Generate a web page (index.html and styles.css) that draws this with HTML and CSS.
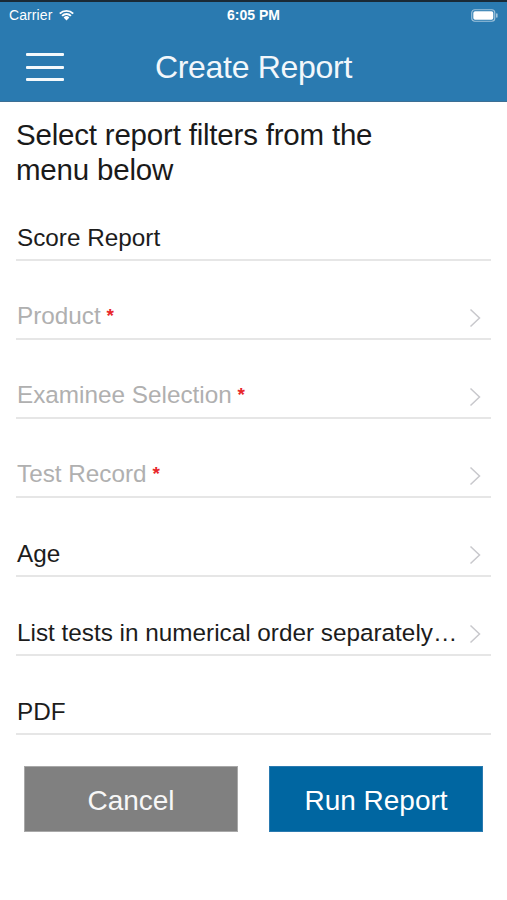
FILE: index.html
```html
<!DOCTYPE html>
<html lang="en">
<head>
<meta charset="utf-8">
<title>Create Report</title>
<link rel="stylesheet" href="styles.css">
</head>
<body>
<div class="app">
  <header class="header">
    <div class="statusbar">
      <div class="sb-left">
        <span class="carrier">Carrier</span>
        <svg class="wifi" width="17" height="12" viewBox="0 0 17 12">
          <path d="M8.5 11.5 L5.6 8.4 A4.2 4.2 0 0 1 11.4 8.4 Z" fill="#fff"/>
          <path d="M3.4 6.2 A7.3 7.3 0 0 1 13.6 6.2 L12.2 7.6 A5.3 5.3 0 0 0 4.8 7.6 Z" fill="#fff"/>
          <path d="M1.1 3.9 A10.6 10.6 0 0 1 15.9 3.9 L14.5 5.3 A8.6 8.6 0 0 0 2.5 5.3 Z" fill="#fff"/>
        </svg>
      </div>
      <span class="time">6:05 PM</span>
      <div class="sb-right">
        <svg class="battery" width="27" height="13" viewBox="0 0 27 13">
          <rect x="0.75" y="0.75" width="23" height="11.5" rx="3" fill="none" stroke="rgba(255,255,255,0.55)" stroke-width="1.2"/>
          <rect x="2.3" y="2.3" width="20" height="8.4" rx="1.8" fill="#fff"/>
          <rect x="25" y="4.3" width="1.6" height="4.4" rx="0.8" fill="rgba(255,255,255,0.55)"/>
        </svg>
      </div>
    </div>
    <div class="navbar">
      <div class="hamburger"><span></span><span></span><span></span></div>
      <h1 class="title">Create Report</h1>
    </div>
  </header>

  <main class="content">
    <p class="intro">Select report filters from the<br>menu below</p>

    <ul class="rows">
      <li class="row"><span class="label">Score Report</span></li>
      <li class="row">
        <span class="label placeholder">Product <span class="req">*</span></span>
        <svg class="chev" width="12" height="20" viewBox="0 0 12 20"><path d="M1.5 1.5 L10.5 10 L1.5 18.5" fill="none" stroke="#c8c8cc" stroke-width="1.5"/></svg>
      </li>
      <li class="row">
        <span class="label placeholder">Examinee Selection <span class="req">*</span></span>
        <svg class="chev" width="12" height="20" viewBox="0 0 12 20"><path d="M1.5 1.5 L10.5 10 L1.5 18.5" fill="none" stroke="#c8c8cc" stroke-width="1.5"/></svg>
      </li>
      <li class="row">
        <span class="label placeholder">Test Record <span class="req">*</span></span>
        <svg class="chev" width="12" height="20" viewBox="0 0 12 20"><path d="M1.5 1.5 L10.5 10 L1.5 18.5" fill="none" stroke="#c8c8cc" stroke-width="1.5"/></svg>
      </li>
      <li class="row">
        <span class="label">Age</span>
        <svg class="chev" width="12" height="20" viewBox="0 0 12 20"><path d="M1.5 1.5 L10.5 10 L1.5 18.5" fill="none" stroke="#c8c8cc" stroke-width="1.5"/></svg>
      </li>
      <li class="row">
        <span class="label">List tests in numerical order separately…</span>
        <svg class="chev" width="12" height="20" viewBox="0 0 12 20"><path d="M1.5 1.5 L10.5 10 L1.5 18.5" fill="none" stroke="#c8c8cc" stroke-width="1.5"/></svg>
      </li>
      <li class="row"><span class="label">PDF</span></li>
    </ul>

    <div class="actions">
      <button class="btn btn-cancel">Cancel</button>
      <button class="btn btn-run">Run Report</button>
    </div>
  </main>
</div>
</body>
</html>
```

FILE: styles.css
```css
* {
  box-sizing: border-box;
}

html, body {
  margin: 0;
  padding: 0;
  background: #ffffff;
}

body {
  font-family: "Liberation Sans", Arial, Helvetica, sans-serif;
  color: #1c1c1c;
}

.app {
  width: 507px;
  min-height: 900px;
  background: #ffffff;
}

.header {
  background: #2a7ab0;
  border-top: 2px solid #1a2a36;
  height: 102px;
  border-bottom: 1px solid #3d6f94;
}

.statusbar {
  height: 26px;
  display: flex;
  align-items: center;
  justify-content: space-between;
  padding: 0 9px;
  position: relative;
  color: #ffffff;
  font-size: 14px;
}

.sb-left {
  display: flex;
  align-items: center;
  gap: 6px;
}

.carrier {
  font-size: 14px;
  letter-spacing: 0.1px;
}

.wifi {
  display: block;
  margin-top: -1px;
}

.time {
  position: absolute;
  left: 0;
  right: 0;
  text-align: center;
  font-weight: bold;
  font-size: 14px;
  pointer-events: none;
}

.sb-right {
  display: flex;
  align-items: center;
}

.battery {
  display: block;
}

.navbar {
  height: 73px;
  display: flex;
  align-items: center;
  position: relative;
  padding-left: 26px;
  padding-top: 5px;
}

.hamburger {
  width: 38px;
  display: flex;
  flex-direction: column;
  gap: 9.5px;
}

.hamburger span {
  display: block;
  height: 3px;
  background: #f4f9fc;
  border-radius: 1px;
}

.title {
  position: absolute;
  left: 0;
  right: 0;
  top: 19px;
  margin: 0;
  text-align: center;
  font-weight: normal;
  font-size: 32px;
  line-height: 40px;
  color: #f2f7fb;
  letter-spacing: -0.3px;
  pointer-events: none;
}

.content {
  padding: 0 16px;
}

.intro {
  margin: 0;
  padding-top: 15px;
  font-size: 29.5px;
  line-height: 35px;
  color: #1a1a1a;
  letter-spacing: -0.2px;
}

.rows {
  list-style: none;
  margin: 36px 0 0 0;
  padding: 0;
  display: flex;
  flex-direction: column;
  gap: 41px;
}

.row {
  display: flex;
  align-items: center;
  justify-content: space-between;
  height: 38px;
  padding: 0 10px 6px 1px;
  border-bottom: 2px solid #e6e6e6;
}

.label {
  font-size: 24.3px;
  line-height: 30px;
  color: #1c1c1c;
  white-space: nowrap;
}

.placeholder {
  color: #b0b0b0;
}

.req {
  color: #e8262a;
  font-size: 19px;
  font-weight: bold;
  position: relative;
  top: -2px;
  margin-left: -1px;
}

.chev {
  display: block;
  flex: none;
  width: 12px;
  height: 20px;
  margin-top: 1px;
}

.actions {
  display: flex;
  gap: 31px;
  padding: 0 8px;
  margin-top: 31px;
}

.btn {
  width: 214px;
  height: 66px;
  border: none;
  font-family: "Liberation Sans", Arial, Helvetica, sans-serif;
  font-size: 28px;
  color: #ffffff;
  padding: 4px 0 0 0;
  cursor: pointer;
}

.btn-cancel {
  background: #808080;
  border: 1px solid #a8a8a8;
  color: #f7f7f7;
}

.btn-run {
  background: #0066a1;
  border: 1px solid #2a7ab0;
}
```
